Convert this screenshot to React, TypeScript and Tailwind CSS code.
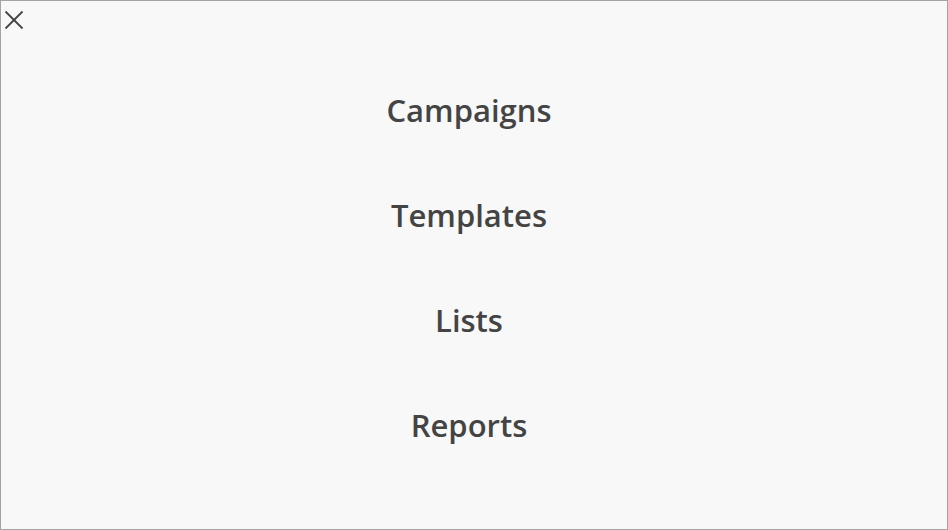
import React from "react";

export default function App() {
  const items = ["Campaigns", "Templates", "Lists", "Reports"];
  return (
    <div className="w-[948px] h-[530px] bg-[#f8f8f8] border border-[#a3a3a3] relative overflow-hidden" style={{ fontFamily: '"Open Sans", sans-serif' }}>
      <button className="absolute left-[3px] top-[9px] w-[20px] h-[20px] text-[#444]">
        <svg width="20" height="20" viewBox="0 0 20 20" fill="none" stroke="currentColor" strokeWidth="1.8">
          <line x1="1.5" y1="1.5" x2="18.5" y2="18.5" />
          <line x1="18.5" y1="1.5" x2="1.5" y2="18.5" />
        </svg>
      </button>
      <nav className="flex flex-col items-center pt-[89px] pr-[10px] gap-[65px]">
        {items.map((t) => (
          <a key={t} className="text-[31px] leading-[40px] font-semibold text-[#444]">{t}</a>
        ))}
      </nav>
    </div>
  );
}
